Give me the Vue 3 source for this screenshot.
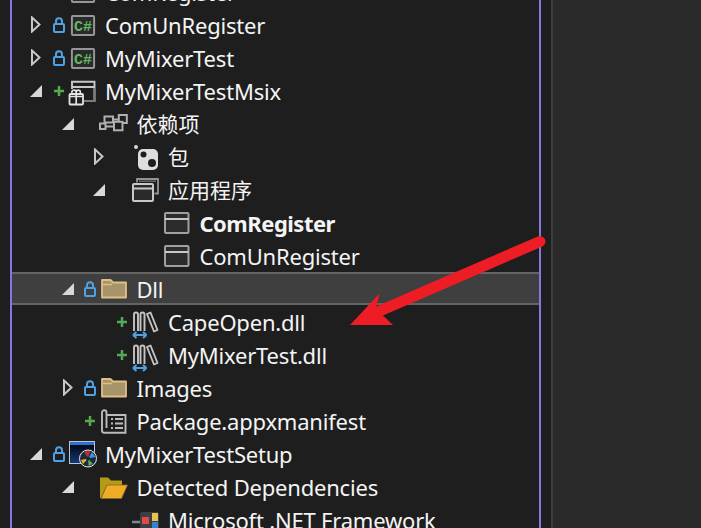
<script setup>
const rows = [
  { text: 'ComRegister', level: 0, arrow: 'closed', lock: true, icon: 'cs' },
  { text: 'ComUnRegister', level: 0, arrow: 'closed', lock: true, icon: 'cs' },
  { text: 'MyMixerTest', level: 0, arrow: 'closed', lock: true, icon: 'cs' },
  { text: 'MyMixerTestMsix', level: 0, arrow: 'open', plus: true, icon: 'pkg' },
  { text: '依赖项', level: 1, arrow: 'open', icon: 'dep', cjk: true },
  { text: '包', level: 2, arrow: 'closed', icon: 'nuget', cjk: true },
  { text: '应用程序', level: 2, arrow: 'open', icon: 'apps', cjk: true },
  { text: 'ComRegister', level: 3, icon: 'win', bold: true },
  { text: 'ComUnRegister', level: 3, icon: 'win' },
  { text: 'Dll', level: 1, arrow: 'open', lock: true, icon: 'folder', selected: true },
  { text: 'CapeOpen.dll', level: 2, plus: true, icon: 'lib' },
  { text: 'MyMixerTest.dll', level: 2, plus: true, icon: 'lib' },
  { text: 'Images', level: 1, arrow: 'closed', lock: true, icon: 'folder' },
  { text: 'Package.appxmanifest', level: 1, plus: true, icon: 'manifest' },
  { text: 'MyMixerTestSetup', level: 0, arrow: 'open', lock: true, icon: 'setup' },
  { text: 'Detected Dependencies', level: 1, arrow: 'open', icon: 'openfolder' },
  { text: 'Microsoft .NET Framework', level: 2, icon: 'net' },
]
</script>

<template>
  <div class="page">
    <div class="panel">
      <div class="tree">
        <div
          v-for="(r, i) in rows"
          :key="i"
          class="row"
          :class="{ selected: r.selected }"
          :style="{ paddingLeft: 18 + r.level * 31.5 + 'px' }"
        >
          <span class="arrow">
            <svg v-if="r.arrow === 'closed'" class="closed" width="10" height="17" viewBox="0 0 10 17"><path d="M1 1.500 8.500 8.500 1 15.500Z" fill="none" stroke="#c8c8c8" stroke-width="2"/></svg>
            <svg v-else-if="r.arrow === 'open'" width="12" height="12" viewBox="0 0 12 12"><path d="M12 0V12H0Z" fill="#d8d8d8"/></svg>
          </span>
          <span class="state">
            <svg v-if="r.lock" width="12" height="16" viewBox="0 0 12 16"><path d="M3 7V4.200a3 3 0 0 1 6 0V7" fill="none" stroke="#4ea1e4" stroke-width="2"/><rect x="1" y="7" width="10" height="8" rx="1" fill="none" stroke="#4ea1e4" stroke-width="2"/></svg>
            <svg v-else-if="r.plus" width="10" height="10" viewBox="0 0 10 10"><path d="M5 0V10M0 5H10" stroke="#55aa55" stroke-width="2.500"/></svg>
          </span>
          <span class="icon" :style="{ marginLeft: 5 + r.level * 0.5 + 'px' }">
            <svg class="glyph" width="26" height="26" viewBox="0 0 26 26">
              <template v-if="r.icon === 'cs'">
                <rect x="1.900" y="3.900" width="22.200" height="19.200" rx="1" fill="#2a2a2a" stroke="#969696" stroke-width="2"/>
                <text x="13" y="18.500" text-anchor="middle" class="cs">C#</text>
              </template>
              <template v-else-if="r.icon === 'pkg'">
                <path d="M2 11V3.800H24.500V23H14M2 9H24.500" fill="none" stroke="#c8c8c8" stroke-width="1.900"/>
                <path d="M14 23H24.500V10" fill="none" stroke="#7c7c7c" stroke-width="1.900"/>
                <rect x="-.5" y="16" width="13.500" height="10.500" rx="1" fill="#1e1e1e" stroke="#e4e4e4" stroke-width="1.800"/>
                <path d="M6.200 13V26.500M-.5 18.500H13M2 15c-1-3.500 3.700-3.500 4.200-1 .5-2.500 5-2.500 4 1" fill="none" stroke="#e4e4e4" stroke-width="1.700"/>
              </template>
              <template v-else-if="r.icon === 'dep'">
                <g fill="none" stroke="#b0b0b0" stroke-width="2">
                  <path d="M16.800 10.500V4H24.800V12H20"/>
                  <rect x="2.500" y="5.500" width="8.500" height="6"/>
                  <path d="M11 8.500H17"/>
                  <rect x="-2" y="12.500" width="5.500" height="5.500" fill="#1e1e1e"/>
                  <rect x="12" y="10.800" width="8.500" height="8.500" fill="#1e1e1e"/>
                  <path d="M3.500 15.500H12"/>
                </g>
              </template>
              <template v-else-if="r.icon === 'nuget'">
                <circle cx="2" cy="3" r="2" fill="#d8d8d8"/>
                <rect x="4" y="5" width="20" height="21" rx="5" fill="#dedede"/>
                <circle cx="9.500" cy="10.500" r="3" fill="#1e1e1e"/><circle cx="18" cy="19" r="4" fill="#1e1e1e"/>
              </template>
              <template v-else-if="r.icon === 'apps'">
                <path d="M3 5.500V2H24V16.500H20.500" fill="none" stroke="#929292" stroke-width="1.800"/>
                <path d="M5 4.200H22" stroke="#6a6a6a" stroke-width="1.400"/>
                <rect x="-1" y="7" width="20" height="17" rx="1" fill="#2a2a2a" stroke="#c8c8c8" stroke-width="2"/>
                <path d="M-1 11.500H19" stroke="#c8c8c8" stroke-width="2"/>
              </template>
              <template v-else-if="r.icon === 'win'">
                <rect x="-1" y="3" width="23.500" height="20" rx="1" fill="#2c2c2c" stroke="#a0a0a0" stroke-width="2"/>
                <path d="M-1 9H22.500" stroke="#c8c8c8" stroke-width="2"/>
              </template>
              <template v-else-if="r.icon === 'folder'">
                <path d="M0 21.500V4H8.500L11 6.500H24V21.500Z" fill="#a8946a" stroke="#e0bf84" stroke-width="1.800" stroke-linejoin="round"/>
                <path d="M.5 8.500H10" stroke="#e0bf84" stroke-width="1.500"/>
              </template>
              <template v-else-if="r.icon === 'lib'">
                <g fill="none" stroke="#c4c4c4" stroke-width="1.900" stroke-linejoin="round">
                  <path d="M0 22V5.500Q0 3.500 2 3.500Q4 3.500 4 5.500V22"/>
                  <path d="M6.500 22V5.500Q6.500 3.500 8.500 3.500Q10.500 3.500 10.500 5.500V22"/>
                  <path d="M13 5 16.500 3.500 23.500 21 20 22.500Z"/>
                </g>
                <path d="M-1 26H12.500M-1 26l3.500-3M-1 26l3.500 3M12.500 26l-3.500-3M12.500 26l-3.500 3" fill="none" stroke="#4ea1e4" stroke-width="2"/>
              </template>
              <template v-else-if="r.icon === 'manifest'">
                <g fill="none" stroke="#bcbcbc" stroke-width="1.900">
                  <path d="M4.500 20V4.500a2.200 2.200 0 0 0-4.500 0V22.500a2.200 2.200 0 0 0 2.200 2.200H23.500V7H4.500"/>
                  <path d="M9 11H11M13 11H21M9 15.500H11M13 15.500H21M9 20H11M13 20H21"/>
                </g>
              </template>
              <template v-else-if="r.icon === 'setup'">
                <defs><linearGradient id="sg" x1="0" y1="0" x2="0" y2="1"><stop offset="0" stop-color="#000"/><stop offset="1" stop-color="#123a78"/></linearGradient></defs>
                <rect x="-.5" y=".5" width="25" height="22" fill="url(#sg)" stroke="#b8c4d0" stroke-width="1"/>
                <rect x="0" y="1" width="24" height="3" fill="#2f6fd0"/>
                <circle cx="18" cy="17.500" r="8.500" fill="#222a40" stroke="#e8e8e8" stroke-width="1"/>
                <path d="M18 17.500 14 10.500 20 10Z" fill="#c03030"/><path d="M18 17.500 22 11 25.500 16Z" fill="#3f90d8"/><path d="M18 17.500 18.500 25 23 23Z" fill="#50b050"/><path d="M18 17.500 13 23 11 19Z" fill="#d8b830"/>
                <circle cx="18" cy="17.500" r="2" fill="#1e2438"/>
              </template>
              <template v-else-if="r.icon === 'openfolder'">
                <path d="M-2 24V3.500H6L9 6.500H20V11H5L-1 24Z" fill="#b59a18"/>
                <path d="M-1 24.500 5 11H25.500L19.500 24.500Z" fill="#f0ac22" stroke="#7a6a3a" stroke-width=".8"/>
              </template>
              <template v-else>
                <path d="M-2 15H6" stroke="#6f8f8f" stroke-width="2.500"/>
                <rect x="6" y="5" width="19" height="22" rx="2" fill="#3a3f46"/>
                <rect x="8" y="10" width="7" height="7" fill="#e04a4a"/>
                <rect x="18" y="6" width="6" height="8" fill="#e8c34a"/>
                <rect x="18" y="15" width="6" height="6" fill="#3a80d0"/>
              </template>
            </svg>
          </span>
          <span class="label" :class="{ bold: r.bold, cjk: r.cjk }" :style="{ marginLeft: 9 - r.level * 0.5 + 'px' }">{{ r.text }}</span>
        </div>
      </div>
    </div>
    <div class="gutter"></div>
    <div class="side"></div>
    <svg class="pointer" width="701" height="528" viewBox="0 0 701 528">
      <path d="M540 241.500 375 313" stroke="#ee1c25" stroke-width="11" stroke-linecap="round" fill="none"/>
      <path d="M379.500 293.500 350 325H393L376 309Z" fill="#ee1c25"/>
    </svg>
  </div>
</template>

<style>
html, body { margin: 0; background: #1e1e1e; overflow: hidden; }
</style>

<style scoped>
.page {
  position: relative;
  display: flex;
  width: 701px;
  height: 528px;
  overflow: hidden;
  background: #1e1e1e;
  color: #f4f4f4;
  font-family: "Noto Sans", "Noto Sans CJK SC", sans-serif;
}
.panel {
  width: 527px;
  height: 528px;
  margin-left: 10px;
  border-left: 2px solid #8676e0;
  border-right: 2px solid #8676e0;
  overflow: hidden;
  flex: none;
}
.tree { margin-top: -25px; }
.row {
  display: flex;
  align-items: center;
  height: 33px;
  box-sizing: border-box;
}
.row.selected {
  background: #3f3f3f;
  border-top: 2px solid #646464;
  border-bottom: 2px solid #646464;
}
.arrow { width: 12px; margin-right: 10px; display: flex; flex: none; }
.closed { margin-left: 1px; }
.state { width: 13px; display: flex; justify-content: center; flex: none; }
.icon { width: 26px; height: 26px; flex: none; }
.glyph { display: block; overflow: visible; }
.label { font-size: 22px; white-space: nowrap; letter-spacing: -0.2px; }
.bold { font-weight: 700; letter-spacing: -0.5px; }
.cjk { font-size: 21px; letter-spacing: 0; margin-top: -1px; }
.cs { font: 700 15px "Liberation Mono", monospace; fill: #62b85f; }
.gutter { width: 10px; flex: none; }
.side {
  flex: 1;
  background: #2a2a2a;
  border-left: 2px solid #3d3d3d;
}
.pointer { position: absolute; left: 0; top: 0; pointer-events: none; }
</style>
